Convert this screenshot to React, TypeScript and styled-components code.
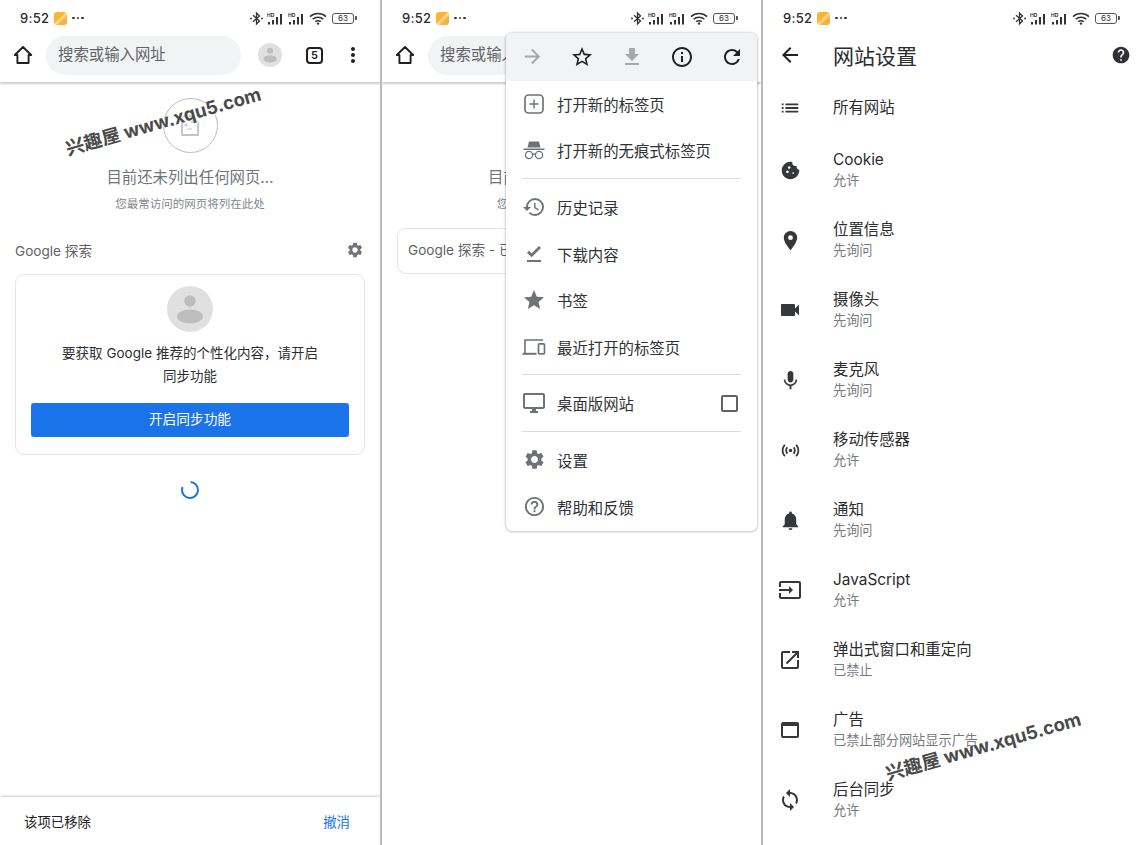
import React from "react";
import styled, { createGlobalStyle } from "styled-components";
import {
  MdArrowBack, MdArrowForward, MdStarBorder, MdFileDownload, MdInfoOutline, MdRefresh,
  MdHistory, MdFileDownloadDone, MdStar, MdOutlineDesktopWindows, MdSettings, MdHelpOutline,
  MdHelp, MdList, MdCookie, MdPlace, MdVideocam, MdMic, MdSensors, MdNotifications,
  MdInput, MdOpenInNew, MdWebAsset, MdSync, MdMoreVert,
} from "react-icons/md";

const Global = createGlobalStyle`
  html, body { margin: 0; padding: 0; background: #fff; overflow: hidden; }
  * { box-sizing: border-box; }
  body { font-family: "Inter", "Noto Sans CJK SC", sans-serif; color: #3c4043; }
`;

const Screen = styled.div`
  display: grid;
  grid-template-columns: 380px 381px 382px;
  width: 1143px;
  height: 845px;
`;

const Phone = styled.section<{ $divided?: boolean }>`
  position: relative;
  display: flex;
  flex-direction: column;
  height: 845px;
  overflow: hidden;
  background: #fff;
  border-left: ${(p) => (p.$divided ? "2px solid #b9b9b9" : "0")};
`;

const Status = styled.div`
  display: flex;
  align-items: center;
  flex: none;
  height: 28px;
  padding: 8px 24px 0 20px;
`;
const Time = styled.span`
  font-size: 13px;
  font-weight: 500;
  letter-spacing: 0.3px;
  color: #2b2b2b;
  width: 34px;
`;
const AppBadge = styled.span`
  width: 13px;
  height: 13px;
  border-radius: 3px;
  background: linear-gradient(135deg, #fbb62f 0 45%, #fde0a0 50%, #f8b03a 70%);
`;
const Dots = styled.span`
  margin-left: 5px;
  display: flex;
  gap: 2px;
  i { width: 2.5px; height: 2.5px; border-radius: 50%; background: #333; }
`;
const StatusRight = styled.div`
  margin-left: auto;
  display: flex;
  align-items: center;
  gap: 3px;
  svg { display: block; }
`;
const Battery = styled.span`
  position: relative;
  width: 22px;
  height: 11px;
  margin: 0 2px 0 2px;
  border: 1px solid #555;
  border-radius: 3px;
  font-size: 8px;
  line-height: 9px;
  text-align: center;
  color: #333;
  &::after {
    content: "";
    position: absolute;
    right: -3.5px;
    top: 2.5px;
    width: 1.5px;
    height: 4px;
    background: #555;
    border-radius: 0 1px 1px 0;
  }
`;

const Toolbar = styled.div`
  display: flex;
  align-items: center;
  flex: none;
  height: 54px;
  box-shadow: 0 1.5px 2px rgba(0, 0, 0, 0.2);
  position: relative;
  z-index: 1;
  background: #fff;
`;
const HomeSlot = styled.span`
  display: flex;
  justify-content: center;
  width: 46px;
`;
const Pill = styled.div`
  width: 195px;
  height: 39px;
  border-radius: 20px;
  background: #f1f3f4;
  padding-left: 12px;
  font-size: 15.4px;
  line-height: 38px;
  color: #5f6368;
  white-space: nowrap;
`;
const ToolAvatar = styled.span`
  margin-left: 17px;
  width: 24px;
  height: 24px;
  flex: none;
`;
const TabCount = styled.span`
  margin-left: 24px;
  width: 17px;
  height: 17px;
  flex: none;
  border: 2px solid #202124;
  border-radius: 4px;
  font-size: 11px;
  font-weight: 600;
  line-height: 13px;
  text-align: center;
  color: #202124;
`;
const MoreSlot = styled.span`
  margin-left: 18px;
  display: flex;
  color: #202124;
`;

const Main = styled.main`
  flex: 1;
  display: flex;
  flex-direction: column;
  align-items: center;
  padding: 0 15px;
`;
const EmptyCircle = styled.div`
  margin-top: 16px;
  width: 55px;
  height: 55px;
  border: 1.5px solid #bdbdbd;
  border-radius: 50%;
  display: flex;
  align-items: center;
  justify-content: center;
`;
const EmptyTitle = styled.div`
  margin-top: 15px;
  font-size: 15.4px;
  line-height: 20px;
  color: #70757a;
`;
const EmptySub = styled.div`
  margin-top: 8px;
  font-size: 11.5px;
  line-height: 16px;
  color: #80868b;
`;
const SectionHead = styled.div`
  align-self: stretch;
  margin-top: 28px;
  height: 20px;
  display: flex;
  align-items: center;
  justify-content: space-between;
  font-size: 13.6px;
  color: #5f6368;
  svg { color: #6f7377; margin-right: 1px; }
`;
const Card = styled.div`
  align-self: stretch;
  margin-top: 14px;
  height: 181px;
  border: 1.5px solid #e4e4e4;
  border-radius: 9px;
  padding: 10.5px 15px 0;
  display: flex;
  flex-direction: column;
  align-items: center;
`;
const CardText = styled.p`
  margin: 10px 0 0;
  font-size: 13.5px;
  line-height: 23px;
  text-align: center;
  color: #2d2f31;
`;
const SyncButton = styled.div`
  align-self: stretch;
  margin-top: 15px;
  height: 34px;
  border-radius: 3px;
  background: #1a73e8;
  color: #fff;
  font-size: 13.7px;
  line-height: 33px;
  text-align: center;
`;
const Spinner = styled.div`
  margin-top: 25px;
  display: flex;
`;
const Snackbar = styled.div`
  flex: none;
  height: 48px;
  display: flex;
  align-items: center;
  justify-content: space-between;
  padding: 0 30px 0 24px;
  font-size: 13.4px;
  color: #202124;
  box-shadow: 0 -1.5px 3px rgba(0, 0, 0, 0.28);
  background: #fff;
`;
const Undo = styled.span`
  color: #1a73e8;
`;
const CollapsedCard = styled.div`
  align-self: stretch;
  margin-top: 16px;
  height: 46px;
  border: 1.5px solid #e4e4e4;
  border-radius: 9px;
  padding-left: 10px;
  font-size: 13.6px;
  line-height: 43px;
  color: #5f6368;
  white-space: nowrap;
`;

const Menu = styled.nav`
  position: absolute;
  left: 124px;
  top: 33px;
  z-index: 3;
  width: 251px;
  height: 498px;
  border-radius: 6px;
  background: #fff;
  overflow: hidden;
  box-shadow: 0 0 3px rgba(0, 0, 0, 0.28), 0 1px 3px rgba(0, 0, 0, 0.12);
`;
const MenuTop = styled.div`
  display: flex;
  align-items: center;
  height: 47.5px;
  padding-left: 1px;
  background: #f1f3f4;
`;
const TopIcon = styled.span<{ $muted?: boolean }>`
  width: 50px;
  display: flex;
  justify-content: center;
  color: ${(p) => (p.$muted ? "#a5a8ab" : "#202124")};
`;
const MenuRow = styled.div`
  display: flex;
  align-items: center;
  height: 46.6px;
  padding-left: 16px;
  font-size: 15.4px;
  color: #303235;
`;
const MenuIcon = styled.span`
  width: 24px;
  height: 24px;
  margin-right: 11px;
  display: flex;
  align-items: center;
  justify-content: center;
  color: #6f7377;
  flex: none;
`;
const Check = styled.span`
  margin-left: auto;
  margin-right: 19px;
  width: 17px;
  height: 17px;
  border: 2px solid #5f6368;
  border-radius: 2px;
`;
const Rule = styled.hr`
  margin: 4px 16px 5px;
  border: 0;
  height: 1px;
  background: #dadce0;
`;

const SettingsHead = styled.header`
  display: flex;
  align-items: center;
  flex: none;
  height: 53px;
  padding: 0 12px 0 15px;
  color: #202124;
`;
const HeadTitle = styled.h1`
  margin: 0 0 0 31px;
  font-size: 21px;
  font-weight: 400;
  color: #2a2c2e;
`;
const HelpSlot = styled.span`
  margin-left: auto;
  display: flex;
  color: #303134;
`;
const SettingRow = styled.div<{ $short?: boolean }>`
  display: flex;
  align-items: center;
  flex: none;
  height: ${(p) => (p.$short ? 54 : 70)}px;
  padding-left: 15px;
`;
const RowIcon = styled.span`
  width: 24px;
  height: 24px;
  margin-right: 31px;
  display: flex;
  align-items: center;
  justify-content: center;
  color: #35373a;
  flex: none;
`;
const RowTitle = styled.div`
  font-size: 15.4px;
  line-height: 20px;
  color: #2a2c2e;
`;
const RowSub = styled.div`
  font-size: 13.2px;
  line-height: 20px;
  color: #777b80;
`;

const Watermark = styled.div<{ $x: number; $y: number }>`
  position: absolute;
  left: ${(p) => p.$x}px;
  top: ${(p) => p.$y}px;
  z-index: 5;
  transform: translate(-50%, -50%) rotate(-16deg);
  font-size: 18.5px;
  font-weight: 700;
  white-space: nowrap;
  color: #4a4a4a;
  text-shadow: 0 0 2px #fff, 1px 1px 1px #fff;
`;

const Signal = () => (
  <svg width="18" height="13" viewBox="0 0 18 13" fill="#333">
    <text x="0" y="4.6" fontSize="5" fontWeight="700" fontFamily="Inter, sans-serif">HD</text>
    <rect x="1" y="10" width="2" height="2.5" />
    <rect x="5" y="8" width="2" height="4.5" />
    <rect x="9" y="5" width="2" height="7.5" />
    <rect x="13" y="2" width="2" height="10.5" />
  </svg>
);

const StatusBar = () => (
  <Status>
    <Time>9:52</Time>
    <AppBadge />
    <Dots><i /><i /><i /></Dots>
    <StatusRight>
      <svg width="15" height="15" viewBox="0 0 15 15" fill="none" stroke="#333" strokeWidth="1.3">
        <path d="M4 4.2 L10.5 10 L7.5 13 V2 L10.5 5 L4 10.8" />
        <circle cx="2" cy="7.5" r=".9" fill="#333" stroke="none" />
        <circle cx="13" cy="7.5" r=".9" fill="#333" stroke="none" />
      </svg>
      <Signal />
      <Signal />
      <svg width="18" height="13" viewBox="0 0 18 13" fill="none" stroke="#333" strokeWidth="1.5">
        <path d="M1 4.6 C5.5 .6 12.5 .6 17 4.6" />
        <path d="M3.6 7.2 C6.6 4.6 11.4 4.6 14.4 7.2" />
        <path d="M6.2 9.7 C7.8 8.5 10.2 8.5 11.8 9.7" />
        <circle cx="9" cy="11.6" r="1.2" fill="#333" stroke="none" />
      </svg>
      <Battery>63</Battery>
    </StatusRight>
  </Status>
);

const Home = () => (
  <svg width="20" height="20" viewBox="0 0 20 20" fill="none" stroke="#202124" strokeWidth="1.9" strokeLinejoin="round">
    <path d="M10 2 L1.8 10 H4.4 V18 H15.6 V10 H18.2 Z" />
  </svg>
);

const Person = ({ size, bg, fg }: { size: number; bg: string; fg: string }) => (
  <svg width={size} height={size} viewBox="0 0 46 46">
    <circle cx="23" cy="23" r="23" fill={bg} />
    <circle cx="23" cy="15" r="5.8" fill={fg} />
    <ellipse cx="23" cy="30.5" rx="12.8" ry="7" fill={fg} />
  </svg>
);

const TopBar = () => (
  <Toolbar>
    <HomeSlot><Home /></HomeSlot>
    <Pill>搜索或输入网址</Pill>
    <ToolAvatar><Person size={24} bg="#e0e0e0" fg="#bdbdbd" /></ToolAvatar>
    <TabCount>5</TabCount>
    <MoreSlot><MdMoreVert size={24} /></MoreSlot>
  </Toolbar>
);

const EmptyState = () => (
  <>
    <EmptyCircle>
      <svg width="18" height="21" viewBox="0 0 18 21" fill="none" stroke="#c4c4c4" strokeWidth="1.8">
        <path d="M1 1 H11 L17 7 V20 H1 Z" />
        <path d="M11 1 V7 H17" fill="#c4c4c4" />
        <path d="M6 14 H11" strokeWidth="1" />
        <circle cx="5" cy="10" r=".5" />
      </svg>
    </EmptyCircle>
    <EmptyTitle>目前还未列出任何网页…</EmptyTitle>
    <EmptySub>您最常访问的网页将列在此处</EmptySub>
  </>
);

const NewTabIcon = () => (
  <svg width="20" height="20" viewBox="0 0 20 20" fill="none" stroke="currentColor" strokeWidth="1.7">
    <rect x="1" y="1" width="18" height="18" rx="3.5" />
    <path d="M10 5.5 V14.5 M5.5 10 H14.5" strokeWidth="1.4" />
  </svg>
);
const IncognitoIcon = () => (
  <svg width="22" height="20" viewBox="0 0 22 20" fill="currentColor">
    <path d="M6 1.5 H16 L17.5 7.5 H4.5 Z" />
    <rect x="0.5" y="8.5" width="21" height="1.5" />
    <g fill="none" stroke="currentColor" strokeWidth="1.3">
      <circle cx="6" cy="15" r="3.6" />
      <circle cx="16" cy="15" r="3.6" />
      <path d="M9.5 14.5 C10.5 13.8 11.5 13.8 12.5 14.5" />
    </g>
  </svg>
);
const RecentIcon = () => (
  <svg width="24" height="18" viewBox="0 0 24 18" fill="none" stroke="currentColor">
    <path d="M3 15 V2 H21" strokeWidth="1.6" />
    <path d="M0.5 15.8 H14.5" strokeWidth="2" />
    <rect x="16.5" y="5.8" width="6" height="10" rx="1" strokeWidth="1.7" />
  </svg>
);

const settings = [
  { t: "Cookie", s: "允许", i: <MdCookie size={21} /> },
  { t: "位置信息", s: "先询问", i: <MdPlace size={23} /> },
  { t: "摄像头", s: "先询问", i: <MdVideocam size={24} /> },
  { t: "麦克风", s: "先询问", i: <MdMic size={23} /> },
  { t: "移动传感器", s: "允许", i: <MdSensors size={21} /> },
  { t: "通知", s: "先询问", i: <MdNotifications size={23} /> },
  { t: "JavaScript", s: "允许", i: <MdInput size={24} /> },
  { t: "弹出式窗口和重定向", s: "已禁止", i: <MdOpenInNew size={24} /> },
  { t: "广告", s: "已禁止部分网站显示广告", i: <MdWebAsset size={24} /> },
  { t: "后台同步", s: "允许", i: <MdSync size={24} /> },
];

export default function App() {
  return (
    <>
      <Global />
      <Screen>
        <Phone>
          <StatusBar />
          <TopBar />
          <Main>
            <EmptyState />
            <SectionHead>Google 探索<MdSettings size={18} /></SectionHead>
            <Card>
              <Person size={46} bg="#e0e0e0" fg="#bdbdbd" />
              <CardText>要获取 Google 推荐的个性化内容，请开启<br />同步功能</CardText>
              <SyncButton>开启同步功能</SyncButton>
            </Card>
            <Spinner>
              <svg width="20" height="20" viewBox="0 0 20 20" fill="none">
                <circle cx="10" cy="10" r="8" stroke="#1a73e8" strokeWidth="2" strokeDasharray="39.8 50.3" transform="rotate(-85 10 10)" />
              </svg>
            </Spinner>
          </Main>
          <Snackbar>该项已移除<Undo>撤消</Undo></Snackbar>
          <Watermark $x={163} $y={120}>兴趣屋 www.xqu5.com</Watermark>
        </Phone>

        <Phone $divided>
          <StatusBar />
          <TopBar />
          <Main>
            <EmptyState />
            <CollapsedCard>Google 探索 - 已隐藏</CollapsedCard>
          </Main>
          <Menu>
            <MenuTop>
              <TopIcon $muted><MdArrowForward size={23} /></TopIcon>
              <TopIcon><MdStarBorder size={24} /></TopIcon>
              <TopIcon $muted><MdFileDownload size={24} /></TopIcon>
              <TopIcon><MdInfoOutline size={24} /></TopIcon>
              <TopIcon><MdRefresh size={24} /></TopIcon>
            </MenuTop>
            <MenuRow><MenuIcon><NewTabIcon /></MenuIcon>打开新的标签页</MenuRow>
            <MenuRow><MenuIcon><IncognitoIcon /></MenuIcon>打开新的无痕式标签页</MenuRow>
            <Rule />
            <MenuRow><MenuIcon><MdHistory size={24} /></MenuIcon>历史记录</MenuRow>
            <MenuRow><MenuIcon><MdFileDownloadDone size={24} /></MenuIcon>下载内容</MenuRow>
            <MenuRow><MenuIcon><MdStar size={24} /></MenuIcon>书签</MenuRow>
            <MenuRow><MenuIcon><RecentIcon /></MenuIcon>最近打开的标签页</MenuRow>
            <Rule />
            <MenuRow><MenuIcon><MdOutlineDesktopWindows size={24} /></MenuIcon>桌面版网站<Check /></MenuRow>
            <Rule />
            <MenuRow><MenuIcon><MdSettings size={23} /></MenuIcon>设置</MenuRow>
            <MenuRow><MenuIcon><MdHelpOutline size={23} /></MenuIcon>帮助和反馈</MenuRow>
          </Menu>
        </Phone>

        <Phone $divided>
          <StatusBar />
          <SettingsHead>
            <MdArrowBack size={24} />
            <HeadTitle>网站设置</HeadTitle>
            <HelpSlot><MdHelp size={20} /></HelpSlot>
          </SettingsHead>
          <SettingRow $short>
            <RowIcon><MdList size={22} /></RowIcon>
            <RowTitle>所有网站</RowTitle>
          </SettingRow>
          {settings.map((r) => (
            <SettingRow key={r.t}>
              <RowIcon>{r.i}</RowIcon>
              <div>
                <RowTitle>{r.t}</RowTitle>
                <RowSub>{r.s}</RowSub>
              </div>
            </SettingRow>
          ))}
          <Watermark $x={220} $y={745}>兴趣屋 www.xqu5.com</Watermark>
        </Phone>
      </Screen>
    </>
  );
}
